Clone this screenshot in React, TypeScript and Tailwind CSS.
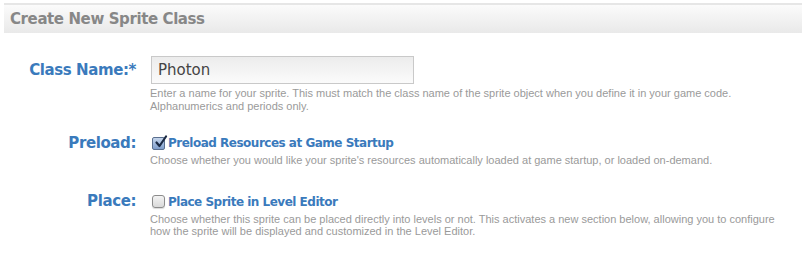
const labelFont = { fontFamily: '"DejaVu Sans", Verdana, sans-serif' };

function HelpText({ children }: { children: React.ReactNode }) {
  return (
    <p className="mt-[3px] font-['Liberation_Sans',Arial,sans-serif] text-[11px] leading-[12.5px] text-[#9a9a9a]">
      {children}
    </p>
  );
}

function Checkbox({ checked }: { checked?: boolean }) {
  return checked ? (
    <span className="relative inline-block h-[13px] w-[13px] shrink-0 rounded-[2px] border border-[#5a6f8f] bg-gradient-to-b from-[#c6d6ec] to-[#7f9dcb]">
      <svg viewBox="0 0 14 14" className="absolute -top-[3px] left-[1px] h-[14px] w-[14px]">
        <path d="M2.5 7.5 L5.5 11 L12 1.5" fill="none" stroke="#1b2a44" strokeWidth="2.2" strokeLinecap="round" strokeLinejoin="round" />
      </svg>
    </span>
  ) : (
    <span className="inline-block h-[13px] w-[13px] shrink-0 rounded-[3px] border border-[#8c8c8c] bg-gradient-to-b from-[#f4f4f4] to-[#d9d9d9] shadow-[0_1px_1px_rgba(0,0,0,0.15)]" />
  );
}

function Row({
  label,
  children,
  className,
  labelClass,
}: {
  label: string;
  children: React.ReactNode;
  className?: string;
  labelClass?: string;
}) {
  return (
    <div className={`flex ${className ?? ""}`}>
      <div
        className={`flex w-[132px] shrink-0 items-center justify-end text-[15px] font-bold tracking-[-0.4px] text-[#3a7abc] ${labelClass ?? "h-[16px]"}`}
        style={labelFont}
      >
        {label}
      </div>
      <div className="ml-[14px] flex-1">{children}</div>
    </div>
  );
}

function CheckLabel({ checked, text }: { checked?: boolean; text: string }) {
  return (
    <label
      className="ml-[2px] flex h-[16px] items-center gap-[3px] text-[12px] font-bold tracking-[-0.5px] text-[#3a7abc]"
      style={labelFont}
    >
      <Checkbox checked={checked} />
      {text}
    </label>
  );
}

export default function App() {
  return (
    <div className="h-[255px] w-[806px] bg-white px-[4px] pt-[3px]">
      <div className="flex h-[30px] items-center border-t-2 border-[#e6e6e6] bg-gradient-to-b from-[#fbfbfb] to-[#e9e9e9] px-[6px]">
        <h1 className="text-[15px] font-bold tracking-[-0.4px] text-[#878787]" style={labelFont}>
          Create New Sprite Class
        </h1>
      </div>

      <Row label="Class Name:*" className="mt-[23px]" labelClass="h-[28px]">
        <div
          className="ml-[1px] flex h-[28px] w-[263px] items-center border border-[#c9c9c9] bg-gradient-to-b from-[#ececec] to-[#fbfbfb] px-[6px] text-[15px] text-[#444]"
          style={labelFont}
        >
          Photon
        </div>
        <HelpText>
          Enter a name for your sprite. This must match the class name of the sprite object when you define it in your game code.
          <br />
          Alphanumerics and periods only.
        </HelpText>
      </Row>

      <Row label="Preload:" className="mt-[23px]">
        <CheckLabel checked text="Preload Resources at Game Startup" />
        <HelpText>
          Choose whether you would like your sprite&apos;s resources automatically loaded at game startup, or loaded on-demand.
        </HelpText>
      </Row>

      <Row label="Place:" className="mt-[27px]">
        <CheckLabel text="Place Sprite in Level Editor" />
        <div className="mt-[2px]">
          <HelpText>
            Choose whether this sprite can be placed directly into levels or not. This activates a new section below, allowing you to configure
            <br />
            how the sprite will be displayed and customized in the Level Editor.
          </HelpText>
        </div>
      </Row>
    </div>
  );
}
